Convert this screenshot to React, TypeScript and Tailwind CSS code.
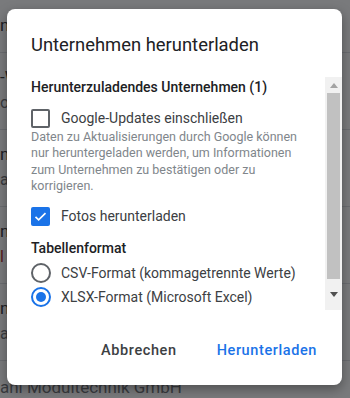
import React from "react";

interface BgRow {
  title: string;
  sub: string;
  red?: boolean;
}

const rows: BgRow[] = [
  { title: "-W", sub: "or" },
  { title: "n", sub: "a" },
  { title: "n", sub: "l", red: true },
  { title: "n", sub: "a" },
];

const CheckRow: React.FC<{ label: string; checked?: boolean }> = ({ label, checked }) => (
  <div className="flex items-center h-5">
    {checked ? (
      <div className="w-[19px] h-[19px] rounded-[2px] bg-[#1a73e8] flex items-center justify-center">
        <svg width="15" height="15" viewBox="0 0 24 24">
          <path d="M4 12.5l5 5L20 6.5" fill="none" stroke="#fff" strokeWidth="2.6" />
        </svg>
      </div>
    ) : (
      <div className="w-[19px] h-[19px] rounded-[2px] border-2 border-[#5f6368]" />
    )}
    <span className="ml-[11px] text-[14px] text-[#3c4043]">{label}</span>
  </div>
);

const RadioRow: React.FC<{ label: string; checked?: boolean }> = ({ label, checked }) => (
  <div className="flex items-center h-5">
    <div
      className={
        checked
          ? "w-5 h-5 rounded-full border-2 border-[#1a73e8] flex items-center justify-center"
          : "w-5 h-5 rounded-full border-2 border-[#5f6368]"
      }
    >
      {checked && <div className="w-[10px] h-[10px] rounded-full bg-[#1a73e8]" />}
    </div>
    <span className="ml-[10px] text-[14px] text-[#3c4043]">{label}</span>
  </div>
);

export default function App() {
  return (
    <div
      className="relative w-[350px] h-[398px] overflow-hidden bg-white"
      style={{ fontFamily: "Roboto, 'Noto Sans', Arial, sans-serif" }}
    >
      {/* page behind the dialog */}
      <div className="flex flex-col">
        <div className="h-[53px] border-b border-[#dadce0] flex items-center">
          <span className="text-[17px] text-[#202124]">ni</span>
        </div>
        {rows.map((r, i) => (
          <div key={i} className="h-[77px] border-b border-[#dadce0] flex flex-col justify-center gap-1">
            <span className="text-[17px] text-[#202124] leading-5">{r.title}</span>
            <span className={r.red ? "text-[16px] text-[#a50e0e]" : "text-[16px] text-[#5f6368]"}>
              {r.sub}
            </span>
          </div>
        ))}
        <div className="pt-[14px]">
          <span className="text-[17px] text-[#5f6368]">ahl Modultechnik GmbH</span>
        </div>
      </div>

      <div className="absolute inset-0 bg-[rgba(32,33,36,0.6)]" />

      {/* dialog */}
      <div className="absolute left-[7px] top-[9px] w-[335px] h-[376px] bg-white rounded-[8px] shadow-[0_4px_12px_rgba(0,0,0,0.35)] flex flex-col overflow-hidden">
        <div className="pt-6 pl-6 h-[48px] text-[18.4px] leading-6 text-[#202124]">
          Unternehmen herunterladen
        </div>
        <div className="mt-5 h-[233px] flex">
          <div className="flex-1 pl-6 pr-2 overflow-hidden">
            <div className="text-[14px] font-medium leading-5 text-[#202124]">
              Herunterzuladendes Unternehmen (1)
            </div>
            <div className="mt-[11px]">
              <CheckRow label="Google-Updates einschließen" />
            </div>
            <p className="mt-px text-[12.5px] leading-[16.3px] text-[#80868b] pr-1">
              Daten zu Aktualisierungen durch Google können nur heruntergeladen werden, um
              Informationen zum Unternehmen zu bestätigen oder zu korrigieren.
            </p>
            <div className="mt-[12px]">
              <CheckRow label="Fotos herunterladen" checked />
            </div>
            <div className="mt-3 text-[14px] font-medium leading-5 text-[#202124]">
              Tabellenformat
            </div>
            <div className="mt-[5px]">
              <RadioRow label="CSV-Format (kommagetrennte Werte)" />
            </div>
            <div className="mt-1">
              <RadioRow label="XLSX-Format (Microsoft Excel)" checked />
            </div>
          </div>
          {/* scrollbar */}
          <div className="w-[17px] bg-[#f1f1f1] flex flex-col items-center">
            <div className="h-4 flex items-center justify-center">
              <svg width="8" height="5" viewBox="0 0 8 5">
                <path d="M0 5L4 0L8 5Z" fill="#a3a3a3" />
              </svg>
            </div>
            <div className="w-[13px] h-[186px] bg-[#c1c1c1]" />
            <div className="flex-1 flex items-center justify-center">
              <svg width="8" height="5" viewBox="0 0 8 5">
                <path d="M0 0L8 0L4 5Z" fill="#505050" />
              </svg>
            </div>
          </div>
        </div>
        <div className="mt-[23px] flex justify-end gap-6 pr-[17px]">
          <button className="h-9 px-2 text-[14.5px] font-medium tracking-[0.6px] text-[#3c4043]">
            Abbrechen
          </button>
          <button className="h-9 px-2 text-[14.5px] font-medium tracking-[0.6px] text-[#1a73e8]">
            Herunterladen
          </button>
        </div>
      </div>
    </div>
  );
}
